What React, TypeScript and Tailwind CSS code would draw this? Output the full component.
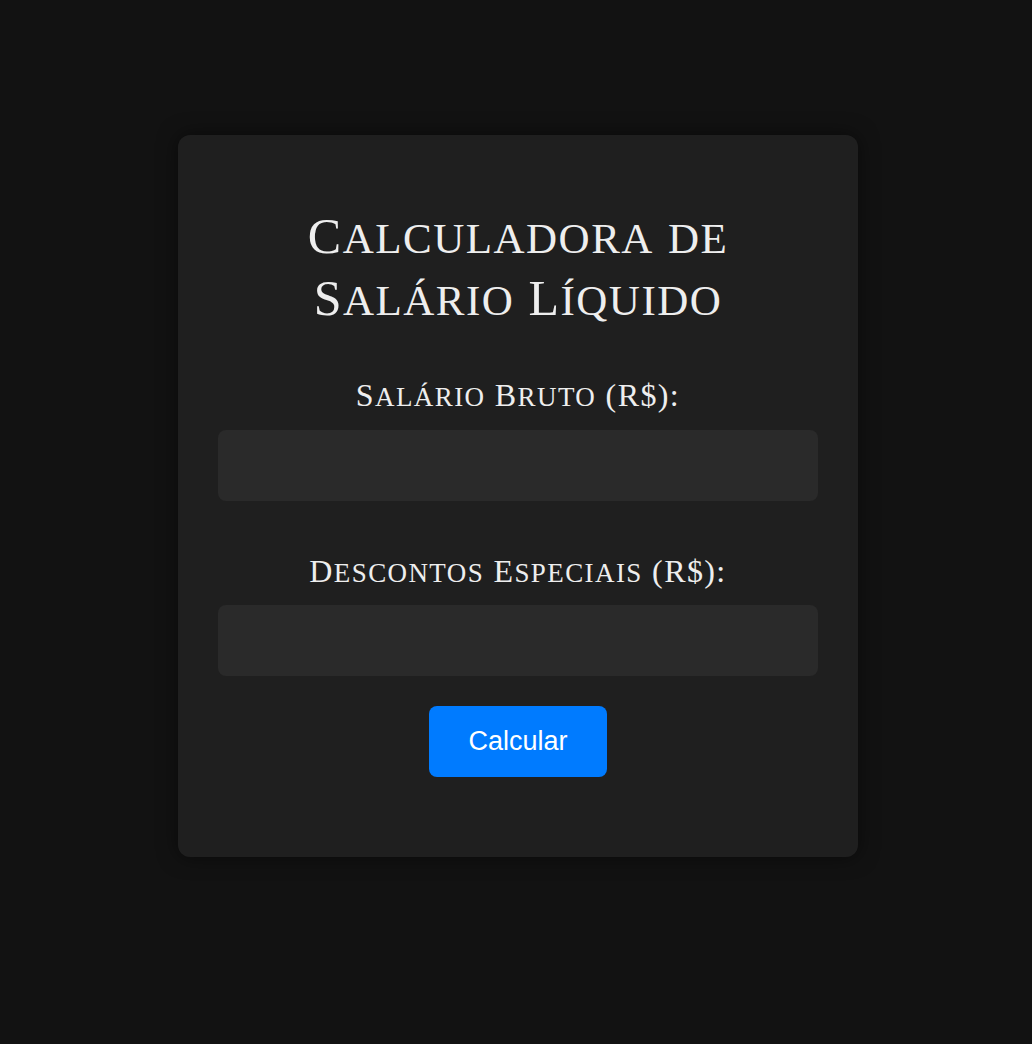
const serif = { fontFamily: '"Liberation Serif", "DejaVu Serif", serif' }

// Renders text the way a caps-only face does: capitals full size, lowercase as smaller capitals
function Caps({ text, small }: { text: string; small: string }) {
  const parts: { low: boolean; s: string }[] = []
  for (const ch of text) {
    const low = ch !== ch.toUpperCase()
    const last = parts[parts.length - 1]
    if (last && last.low === low) last.s += ch
    else parts.push({ low, s: ch })
  }
  return (
    <>
      {parts.map((p, i) =>
        p.low ? (
          <span key={i} className={`leading-none ${small}`}>
            {p.s.toUpperCase()}
          </span>
        ) : (
          <span key={i}>{p.s}</span>
        )
      )}
    </>
  )
}

export default function App() {
  return (
    <div className="min-h-[1044px] w-full bg-[#121212] flex justify-center pt-[135px] pl-[4px]">
      <div className="w-[680px] h-[722px] bg-[#1f1f1f] rounded-xl shadow-[0_0_20px_rgba(0,0,0,0.5)] px-10 pt-[70px] flex flex-col items-center">
        <h1 className="text-center text-[#eeeeee] text-[50px] leading-[62px] font-normal tracking-[1.5px]" style={serif}>
          <Caps text="Calculadora de" small="text-[43px]" />
          <br />
          <Caps text="Salário Líquido" small="text-[43px]" />
        </h1>

        <label className="mt-[51px] text-[#eeeeee] text-[32px] leading-[30px] tracking-[1.4px]" style={serif}>
          <Caps text="Salário Bruto (R$):" small="text-[27px]" />
        </label>
        <input type="number" className="mt-[19px] w-full h-[71px] rounded-lg bg-[#2a2a2a] outline-none text-white px-4" />

        <label className="mt-[55px] text-[#eeeeee] text-[32px] leading-[30px] tracking-[1.4px]" style={serif}>
          <Caps text="Descontos Especiais (R$):" small="text-[27px]" />
        </label>
        <input type="number" className="mt-[18px] w-full h-[71px] rounded-lg bg-[#2a2a2a] outline-none text-white px-4" />

        <button
          className="mt-[30px] w-[178px] h-[71px] rounded-lg bg-[#007bff] text-white text-[27px]"
          style={{ fontFamily: '"Liberation Sans", Arial, sans-serif' }}
        >
          Calcular
        </button>
      </div>
    </div>
  )
}
